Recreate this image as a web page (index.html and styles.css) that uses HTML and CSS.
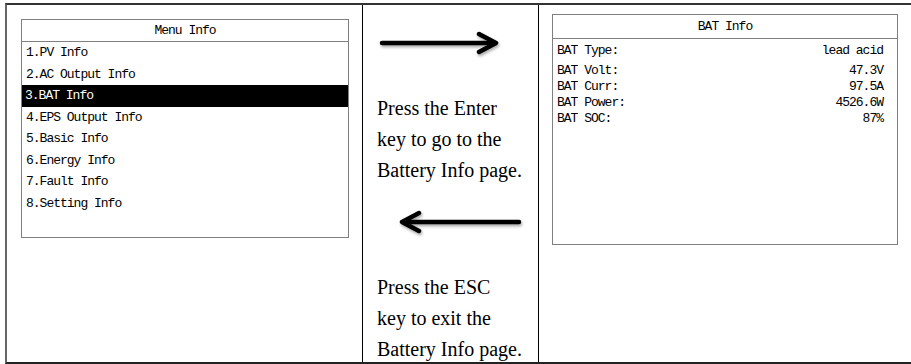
FILE: index.html
```html
<!DOCTYPE html>
<html lang="en">
<head>
  <meta charset="UTF-8">
  <meta name="viewport" content="width=device-width, initial-scale=1.0">
  <title>BAT Info</title>
  <link rel="stylesheet" href="styles.css">
</head>
<body>
  <div class="sheet">
    <div class="cell cell-menu">
      <div class="lcd menu">
        <div class="lcd-title">Menu Info</div>
        <ul class="menu-list">
          <li>1.PV Info</li>
          <li>2.AC Output Info</li>
          <li class="active">3.BAT Info</li>
          <li>4.EPS Output Info</li>
          <li>5.Basic Info</li>
          <li>6.Energy Info</li>
          <li>7.Fault Info</li>
          <li>8.Setting Info</li>
        </ul>
      </div>
    </div>

    <div class="cell cell-steps">
      <svg class="arrow arrow-next" width="150" height="30" viewBox="0 0 150 30">
        <line x1="5" y1="15" x2="117" y2="15" />
        <polyline points="102,6 119,15 102,24" />
      </svg>
      <p class="step">Press the Enter<br>key to go to the<br>Battery Info page.</p>

      <svg class="arrow arrow-back" width="150" height="30" viewBox="0 0 150 30">
        <line x1="28" y1="15" x2="142" y2="15" />
        <polyline points="42,6 25,15 42,24" />
      </svg>
      <p class="step">Press the ESC<br>key to exit the<br>Battery Info page.</p>
    </div>

    <div class="cell cell-bat">
      <div class="lcd bat">
        <div class="lcd-title">BAT Info</div>
        <div class="bat-rows">
          <div class="bat-row"><span>BAT Type:</span><span>lead acid</span></div>
          <div class="bat-row"><span>BAT Volt:</span><span>47.3V</span></div>
          <div class="bat-row"><span>BAT Curr:</span><span>97.5A</span></div>
          <div class="bat-row"><span>BAT Power:</span><span>4526.6W</span></div>
          <div class="bat-row"><span>BAT SOC:</span><span>87%</span></div>
        </div>
      </div>
    </div>
  </div>
</body>
</html>
```

FILE: styles.css
```css
* {
  margin: 0;
  padding: 0;
  box-sizing: border-box;
}

html, body {
  background: #fff;
  overflow: hidden;
}

body {
  color: #000;
}

.sheet {
  display: grid;
  grid-template-columns: 356px 176px 1fr;
  grid-template-rows: 357px;
  margin: 3px 0 0 5px;
  border-top: 2px solid #333;
  border-bottom: 2px solid #222;
  border-left: 2px solid #666;
}

.cell {
  overflow: hidden;
}

.cell-menu,
.cell-steps {
  border-right: 1px solid #000;
}

/* little lcd screens */
.lcd {
  border: 1px solid #808080;
  font-family: "Liberation Mono", monospace;
  font-size: 13px;
  letter-spacing: -1px;
  color: #000;
}

.lcd-title {
  text-align: center;
  border-bottom: 1px solid #808080;
}

.cell-menu {
  padding: 14px 0 0 14px;
}

.menu {
  width: 328px;
  height: 219px;
}

.menu .lcd-title {
  height: 22px;
  line-height: 21px;
}

.menu-list {
  list-style: none;
}

.menu-list li {
  height: 21.5px;
  line-height: 21.5px;
  padding-left: 4px;
}

.menu-list li.active {
  background: #000;
  color: #fff;
  padding-left: 3px;
}

/* middle column */
.cell-steps {
  padding: 23px 0 0 14px;
}

.arrow {
  display: block;
  filter: drop-shadow(1px 2px 1.5px rgba(0, 0, 0, 0.35));
}

.arrow line,
.arrow polyline {
  fill: none;
  stroke: #000;
  stroke-width: 4.5;
  stroke-linecap: round;
  stroke-linejoin: round;
}

.step {
  font-family: "Liberation Serif", "Times New Roman", serif;
  font-size: 20px;
  line-height: 31px;
  margin-top: 34.5px;
  white-space: nowrap;
}

.arrow-back {
  margin-top: 21.5px;
}

/* battery screen */
.cell-bat {
  padding: 9px 0 0 13px;
}

.bat {
  width: 346px;
  height: 231px;
}

.bat .lcd-title {
  height: 24px;
  line-height: 23px;
}

.bat-rows {
  padding: 4px 14px 0 4px;
}

.bat-row {
  display: flex;
  justify-content: space-between;
  line-height: 16px;
}

.bat-row:first-child {
  margin-bottom: 4px;
}
```
